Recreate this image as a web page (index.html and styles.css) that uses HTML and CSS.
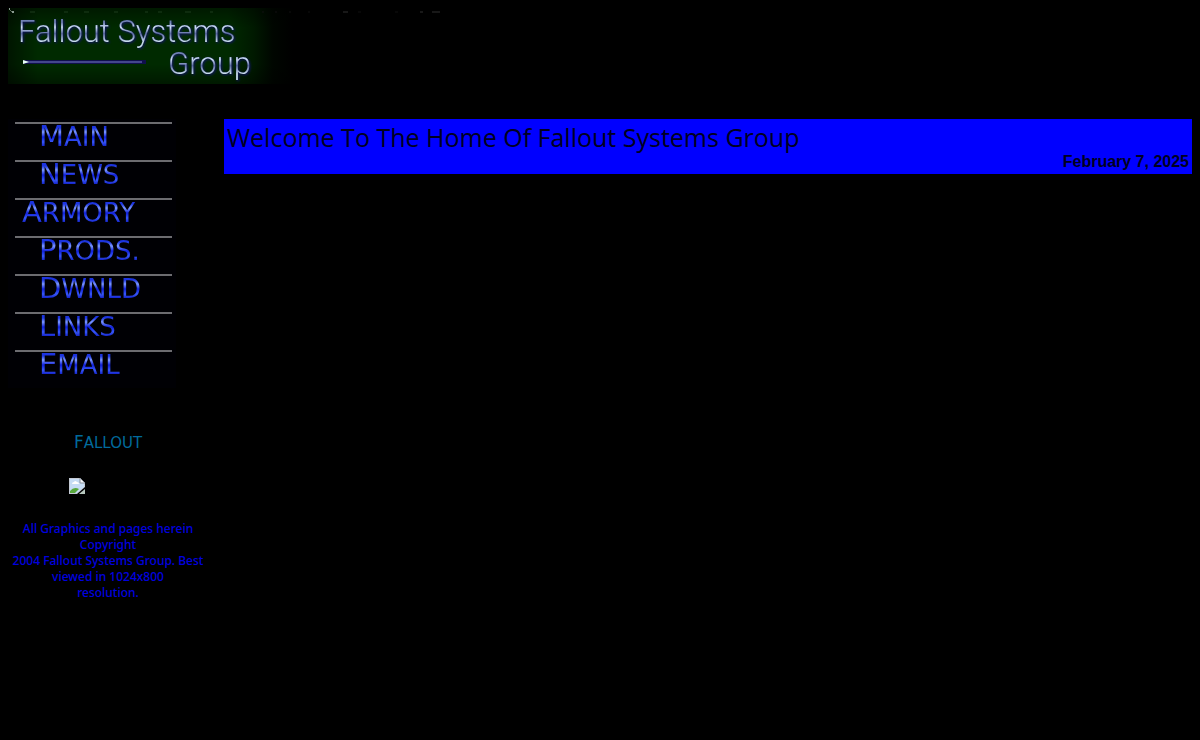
FILE: index.html
```html
<!DOCTYPE html>
<html lang="en">
<head>
    <meta charset="UTF-8">
    <meta name="viewport" content="width=device-width, initial-scale=1.0">
    <title>Fallout Systems Group</title>
    <link rel="stylesheet" href="styles.css">
</head>
<body>
    <header class="banner">
        <svg class="specks" width="450" height="6" viewBox="0 0 450 6" aria-hidden="true">
            <path d="M1 1h1M4 4h2" stroke="#b8c8c0" stroke-width="1.5"/>
            <path d="M2 2l2 2" stroke="#607060"/>
            <path d="M22 4h5M56 4h4M76 4h5M106 4h4M137 4h3M150 4h4M177 4h6M202 4h3" stroke="#1c3c1c"/>
            <path d="M254 4h2M267 4h2M281 4h2M300 4h2M350 4h3M387 4h3" stroke="#101010"/>
            <path d="M335 4h5M412 4h3M424 4h8" stroke="#303030"/>
        </svg>
        <div class="logo">
            <span class="name">Fallout Systems</span>
            <div class="second">
                <svg class="needle" width="126" height="6" viewBox="0 0 126 6" aria-hidden="true">
                    <path d="M2 3h122" stroke="#10104c" stroke-width="4"/>
                    <path d="M3 3h117" stroke="#5558a0" stroke-width="1.5"/>
                    <path d="M1 1l6 2-6 2z" fill="#e8fff4"/>
                </svg>
                <span class="name">Group</span>
            </div>
        </div>
    </header>

    <div class="page">
        <aside class="side">
            <nav class="menu">
                <a href="#main">Main</a>
                <a href="#news">News</a>
                <a href="#armory" class="wide">Armory</a>
                <a href="#prods">Prods.</a>
                <a href="#dwnld">Dwnld</a>
                <a href="#links">Links</a>
                <a href="#email">Email</a>
            </nav>
            <div class="tag">Fallout</div>
            <svg class="missing" width="16" height="16" viewBox="0 0 16 16" aria-hidden="true">
                <path d="M0 0h11l5 5v4l-8 7H0z" fill="#c3c9d3"/>
                <path d="M1 1h10v4h4v4l-7 6H1z" fill="#c6dcf5"/>
                <path d="M3 6q0-2 2-2 1-2 3 0 2 0 2 2z" fill="#fff"/>
                <path d="M1 15v-2q4-5 9-2l-4 4z" fill="#58a83c"/>
                <path d="M11 0l5 5h-5z" fill="#f4f6fa" stroke="#8b929c"/>
                <path d="M16 11v5h-6z" fill="#b9c9c0"/>
            </svg>
            <p class="copy">All Graphics and pages herein Copyright<br>2004 Fallout Systems Group. Best viewed in 1024x800<br>resolution.</p>
        </aside>
        <main class="content">
            <h1 class="welcome">Welcome To The Home Of Fallout Systems Group</h1>
            <div class="date">February 7, 2025</div>
        </main>
    </div>
</body>
</html>
```
FILE: styles.css
```css
body {
    margin: 8px;
    background-color: #000;
    color: #0000e0;
    font-family: "Noto Sans", "Open Sans", sans-serif;
}

.banner {
    position: relative;
    max-width: 450px;
    margin-bottom: 35px;
    background: linear-gradient(to right, rgba(0, 0, 0, 0.5), transparent 30px),
        linear-gradient(to bottom, rgba(0, 0, 0, 0.4), transparent 20px, transparent 56px, rgba(0, 0, 0, 0.4)),
        linear-gradient(to right, #002a00 220px, #001a00 245px, #000600 265px, #000 285px);
}

.specks {
    position: absolute;
    top: 0;
    left: 0;
}

.logo {
    width: 248px;
    height: 68px;
    padding: 8px 0 0 10px;
}

.name {
    display: block;
    font-family: Roboto, "Liberation Sans", sans-serif;
    font-size: 31px;
    font-weight: 300;
    line-height: 32px;
    color: transparent;
    background: linear-gradient(to bottom, #7080b4 20%, #d0e0f8 35%, #5c6aa4 55%, #c8dcec 80%);
    -webkit-background-clip: text;
    background-clip: text;
    filter: drop-shadow(1px 1px 1px #10106c);
}

.second {
    display: flex;
    gap: 20px;
    padding-left: 4px;
}

.needle {
    margin-top: 11px;
}

.page {
    display: flex;
    align-items: flex-start;
    gap: 16px;
}

.side {
    flex: 0 0 200px;
    text-align: center;
}

.menu {
    display: flex;
    flex-direction: column;
    width: 168px;
    padding: 3px 0 0 7px;
    box-sizing: border-box;
    background-color: #000004;
}

.menu a {
    display: block;
    box-sizing: border-box;
    height: 38px;
    margin-right: 4px;
    padding-left: 24px;
    border-top: 2px solid #6c6c70;
    font-family: "DejaVu Sans", sans-serif;
    font-size: 26px;
    line-height: 24px;
    text-align: left;
    text-transform: uppercase;
    text-decoration: none;
    color: transparent;
    background: linear-gradient(to bottom, #1c34e0 4px, #7c98ff 8px, #1020d8 13px, #3858f8 18px, #0c18c0 23px);
    -webkit-background-clip: text;
    background-clip: text;
}

.menu a::first-letter {
    font-size: 29px;
}

.menu .wide {
    padding-left: 7px;
}

.tag {
    margin-top: 44px;
    font-family: "DejaVu Sans", sans-serif;
    font-size: 15px;
    line-height: 20px;
    text-transform: uppercase;
    color: #006a9c;
}

.tag::first-letter {
    font-size: 17px;
}

.missing {
    display: block;
    margin: 25px 0 27px 61px;
}

.copy {
    margin: 0;
    font-size: 12px;
    font-weight: 500;
    line-height: 16px;
}

.content {
    flex: 1;
    padding: 3px;
    background-color: #0000ff;
    color: #000020;
}

.welcome {
    margin: 0;
    font-family: "Open Sans", "Noto Sans", sans-serif;
    font-size: 25px;
    font-weight: 400;
    line-height: 31px;
}

.date {
    font-family: "Liberation Sans", Arial, sans-serif;
    font-size: 16px;
    font-weight: 700;
    line-height: 18px;
    text-align: right;
}
```
